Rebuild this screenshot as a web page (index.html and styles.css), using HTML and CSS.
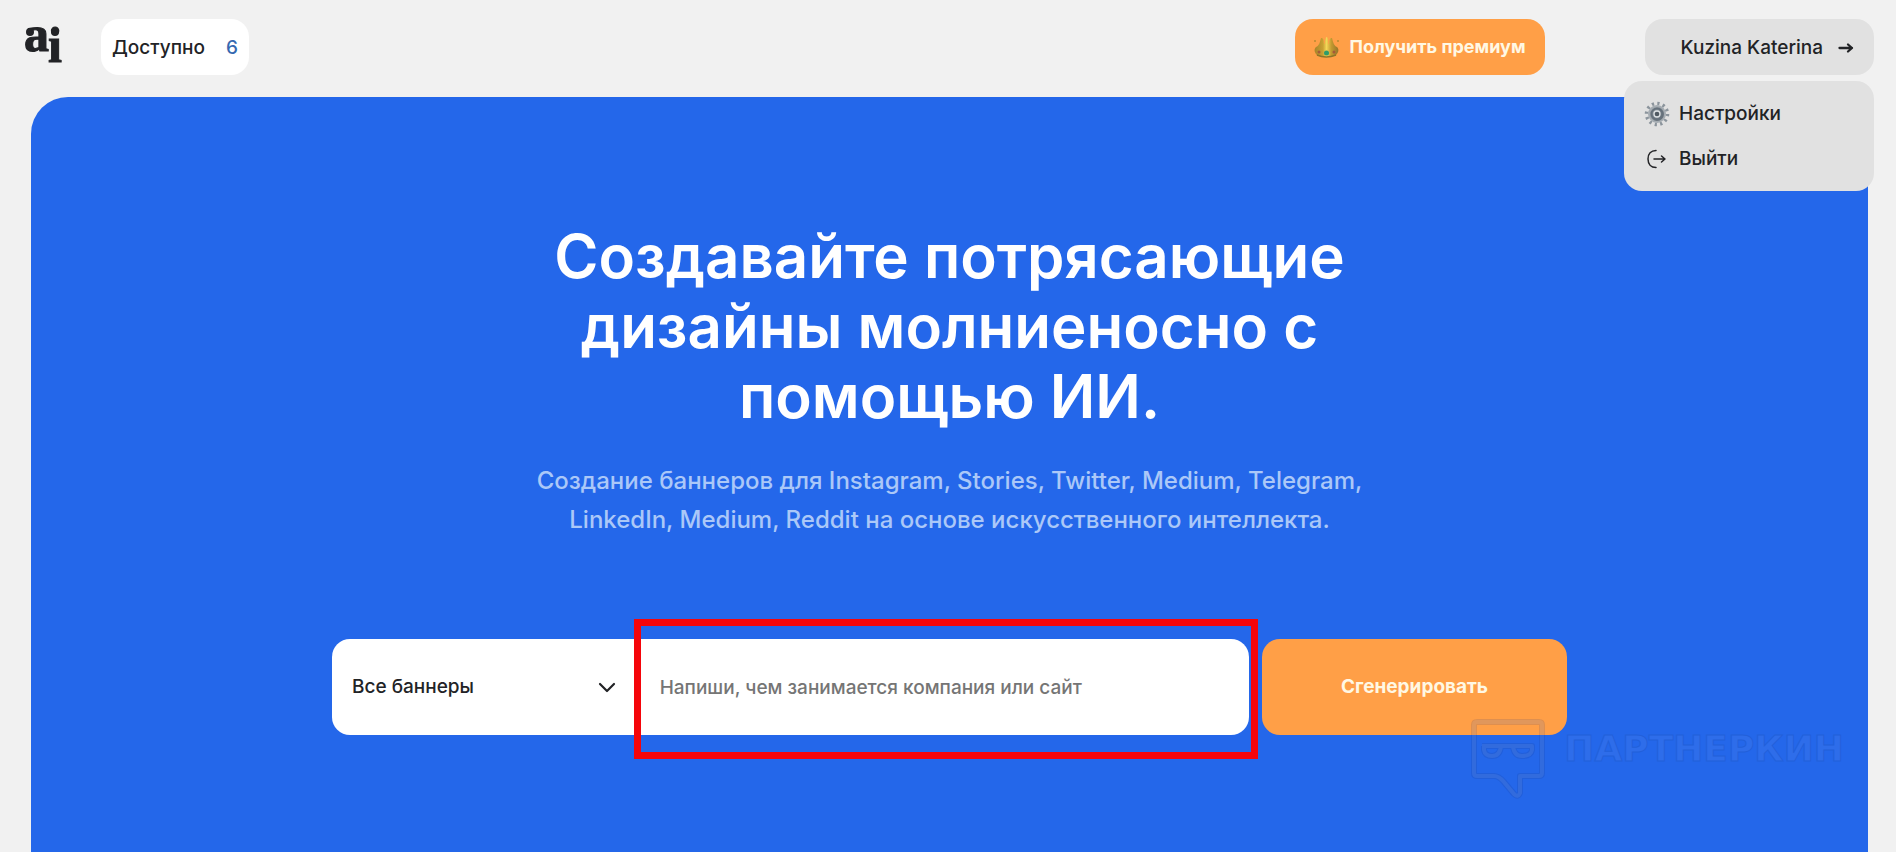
FILE: index.html
```html
<!DOCTYPE html>
<html lang="ru">
<head>
<meta charset="utf-8">
<meta name="viewport" content="width=device-width, initial-scale=1">
<title>AI баннеры</title>
<link rel="stylesheet" href="styles.css">
</head>
<body>
<header class="header">
  <a class="logo" href="#" aria-label="ai">
    <svg width="42" height="56" viewBox="0 0 42 56">
      <g class="logo-letters"><text x="0" y="32">a</text><text x="24" y="43">i</text></g>
      <circle cx="6" cy="13" r="4"/>
      <circle cx="31" cy="13" r="4"/>
    </svg>
  </a>
  <div class="credits"><span>Доступно</span><span class="credits-count">6</span></div>
  <button class="premium" type="button">
    <svg width="25" height="22" viewBox="0 0 25 22">
      <defs><linearGradient id="gold" x1="0" y1="0" x2="1" y2="0"><stop offset="0" stop-color="#a8842a"/><stop offset=".35" stop-color="#c9a032"/><stop offset=".5" stop-color="#f3d657"/><stop offset=".7" stop-color="#c39a30"/><stop offset="1" stop-color="#94742a"/></linearGradient></defs>
      <path d="M3 19C0 16 0 13 2 11C5 10 6 6 7 2Q10 1 10 8Q11 9 11 5Q12 1 12.500 1Q14 1 14 5Q14 9 15 8Q15 1 18 2C19 6 20 10 23 11C25 13 25 16 22 19C17 22 8 22 3 19Z" fill="url(#gold)"/>
      <path d="M3 19Q12 23 22 19" fill="none" stroke="#8f7427" stroke-width="1.500"/>
      <circle cx="12.500" cy="17" r="2.500" fill="#2f9c6a"/><circle cx="5" cy="16" r="1.500" fill="#a5593a"/><circle cx="20" cy="16" r="1.500" fill="#a5593a"/>
      <circle cx="1" cy="5" r="1" fill="#b98a30"/><circle cx="24" cy="5" r="1" fill="#b98a30"/>
    </svg>
    <span>Получить премиум</span>
  </button>
  <div class="account">
    <button class="account-button" type="button" aria-expanded="true">
      <span>Kuzina Katerina</span>
      <svg width="16" height="12" viewBox="0 0 16 12"><path d="M1.500 6H14M10 2.500L14 6L10 9.500" fill="none" stroke="#222326" stroke-width="2.300" stroke-linecap="round" stroke-linejoin="round"/></svg>
    </button>
    <nav class="menu">
      <a href="#">
        <svg width="26" height="26" viewBox="0 0 26 26">
          <defs><linearGradient id="steel" x1="0" y1="0" x2="1" y2="1"><stop offset="0" stop-color="#a9b0b6"/><stop offset="1" stop-color="#59636c"/></linearGradient></defs>
          <circle cx="13" cy="13" r="10.500" fill="none" stroke="#8b949c" stroke-width="3.500" stroke-dasharray="2.200 3.300"/>
          <circle cx="13" cy="13" r="8" fill="url(#steel)" stroke="#a5acb2" stroke-width="2"/>
          <circle cx="13" cy="13" r="5.500" fill="none" stroke="#65717c" stroke-width="2"/>
          <circle cx="13" cy="13" r="3" fill="#4f5962" stroke="#dce1e5" stroke-width="1.300"/>
        </svg>
        <span>Настройки</span>
      </a>
      <a href="#">
        <svg width="26" height="22" viewBox="0 0 26 22"><path d="M12 2.500C7 2.500 4 6 4 11S7 19.500 12 19.500M10 11H21M17.500 8L21 11L17.500 14" fill="none" stroke="#222326" stroke-width="1.500" stroke-linecap="round" stroke-linejoin="round"/></svg>
        <span>Выйти</span>
      </a>
    </nav>
  </div>
</header>
<main class="hero">
  <h1 class="title">Создавайте потрясающие дизайны молниеносно с помощью ИИ.</h1>
  <p class="subtitle">Создание баннеров для Instagram, Stories, Twitter, Medium, Telegram, LinkedIn, Medium, Reddit на основе искусственного интеллекта.</p>
  <form class="generator">
    <div class="fields">
      <div class="type">
        <select aria-label="Тип баннера"><option>Все баннеры</option></select>
        <svg class="chevron" width="18" height="12" viewBox="0 0 18 12"><path d="M2 2L9 9L16 2" fill="none" stroke="#222326" stroke-width="2.200" stroke-linecap="round" stroke-linejoin="round"/></svg>
      </div>
      <div class="query">
        <input type="text" aria-label="Описание компании" placeholder="Напиши, чем занимается компания или сайт">
        <div class="highlight"></div>
      </div>
    </div>
    <button class="generate" type="button">Сгенерировать</button>
  </form>
  <div class="watermark">
    <svg width="76" height="82" viewBox="0 0 76 82">
      <g fill="none" stroke-linejoin="round">
        <g class="mark-edge"><path d="M7 4H69Q72 4 72 7V55Q72 58 69 58H50V75Q48 80 44 76L34 64Q29 58 24 58H7Q4 58 4 55V7Q4 4 7 4Z"/><path d="M12 28H62V32Q61 38 52 38Q44 38 43 28M14 28V32Q15 38 22 38Q30 38 31 28"/></g>
        <g class="mark-fill"><path d="M7 4H69Q72 4 72 7V55Q72 58 69 58H50V75Q48 80 44 76L34 64Q29 58 24 58H7Q4 58 4 55V7Q4 4 7 4Z"/><path d="M12 28H62V32Q61 38 52 38Q44 38 43 28M14 28V32Q15 38 22 38Q30 38 31 28"/></g>
      </g>
    </svg>
    <span>ПАРТНЕРКИН</span>
  </div>
</main>
</body>
</html>
```
FILE: styles.css
```css
* { box-sizing: border-box; }
body {
  margin: 0;
  min-height: 100vh;
  display: flex;
  flex-direction: column;
  background: #f1f1f1;
  color: #222326;
  font: 500 19px/24px Inter, "Noto Sans", sans-serif;
}
button, input, select { font: inherit; color: inherit; border: 0; }
button { cursor: pointer; }
svg { display: block; flex: none; }
a { color: inherit; text-decoration: none; }

.header { display: flex; align-items: center; padding: 19px 22px 22px 24px; }
.logo { margin-right: 35px; fill: #222326; }
.logo svg { overflow: visible; }
.logo-letters { font: 700 50px "Liberation Serif", serif; stroke: #222326; stroke-width: 1; }
.credits {
  display: flex;
  justify-content: space-between;
  width: 148px;
  padding: 17px 11px 15px;
  border-radius: 18px;
  background: #fff;
}
.credits-count { color: #3568b0; }
.premium {
  display: flex;
  align-items: center;
  justify-content: center;
  gap: 10px;
  width: 250px;
  height: 56px;
  margin-left: auto;
  margin-right: 100px;
  padding: 0;
  border-radius: 18px;
  background: #ff9f47;
  color: #fff8e4;
  font-size: 18px;
  font-weight: 700;
  white-space: nowrap;
}
.account { position: relative; }
.account-button {
  display: flex;
  align-items: center;
  justify-content: flex-end;
  gap: 15px;
  width: 229px;
  height: 56px;
  padding: 1px 20px 0;
  border-radius: 18px;
  background: #e1e1e1;
}
.menu {
  position: absolute;
  top: 62px;
  right: 0;
  z-index: 2;
  display: flex;
  flex-direction: column;
  gap: 21px;
  width: 250px;
  padding: 21px 20px 20px;
  border-radius: 18px;
  background: #e1e1e1;
}
.menu a { display: flex; align-items: center; gap: 9px; height: 24px; }

.hero {
  position: relative;
  flex: 1;
  display: flex;
  flex-direction: column;
  align-items: center;
  margin: 0 28px 0 31px;
  padding: 124px 20px 100px;
  border-radius: 37px 37px 0 0;
  background: #2467ea;
}
.title {
  max-width: 820px;
  margin: 0 0 30px;
  color: #fff;
  font-size: 60px;
  line-height: 70px;
  font-weight: 600;
  text-align: center;
}
.subtitle {
  max-width: 850px;
  margin: 0 0 100px;
  color: #abc8f8;
  font-size: 24px;
  line-height: 39px;
  text-align: center;
}
.generator { display: flex; gap: 13px; width: 100%; max-width: 1235px; height: 96px; }
.fields { flex: 3; display: flex; border-radius: 18px; background: #fff; }
.type { flex: 1; position: relative; }
.type select { appearance: none; width: 100%; height: 100%; padding: 0 20px; background: transparent; }
.chevron { position: absolute; top: 43px; right: 22px; pointer-events: none; }
.query { flex: 2; position: relative; }
.query input { width: 100%; height: 100%; padding: 0 22px; background: transparent; }
.query input::placeholder { color: #757575; opacity: 1; }
.highlight { position: absolute; inset: -20px -9px -24px -4px; border: 7px solid #f5050a; pointer-events: none; }
.generate { flex: 0 0 305px; border-radius: 18px; background: #ff9f47; color: #fff8e4; font-weight: 700; }

.watermark {
  position: absolute;
  top: 621px;
  right: 24px;
  display: flex;
  gap: 18px;
  font: 700 36px/62px "DejaVu Sans", sans-serif;
  color: #2e6dea;
  -webkit-text-stroke: 1px #2260da;
  pointer-events: none;
}
.mark-edge { stroke: rgba(20, 50, 130, 0.14); stroke-width: 6; }
.mark-fill { stroke: rgba(255, 255, 255, 0.08); stroke-width: 4; }
```
